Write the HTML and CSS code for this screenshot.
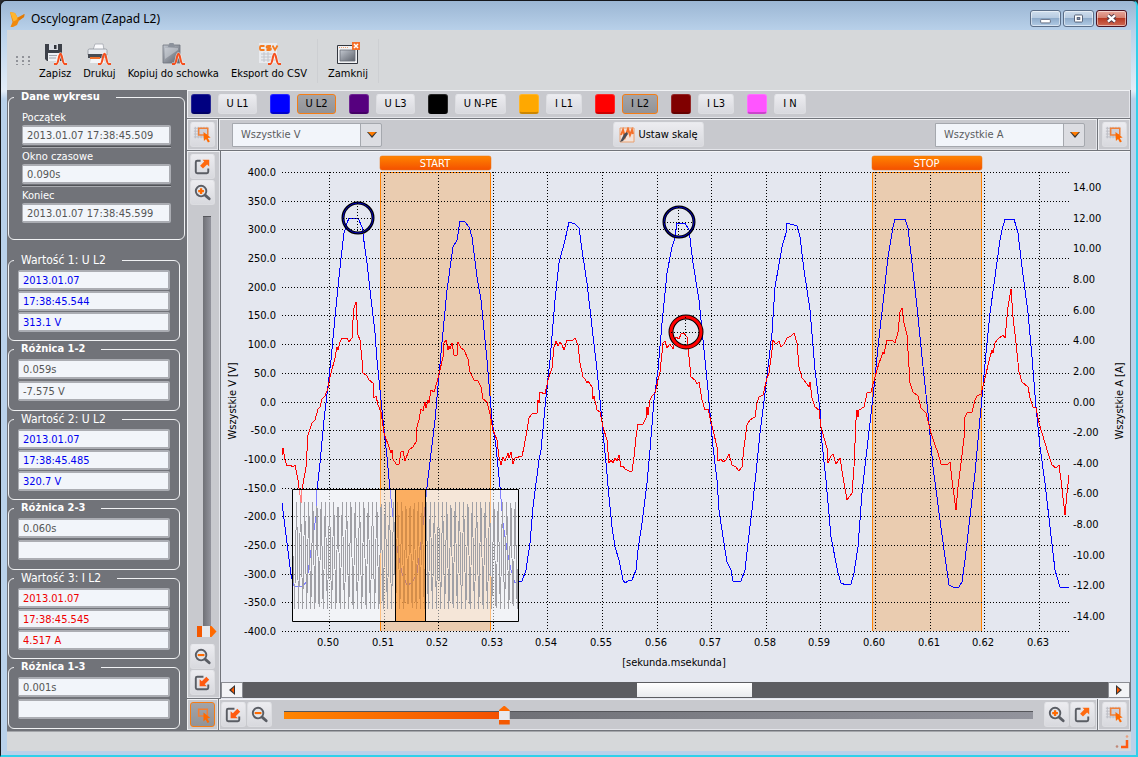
FILE: index.html
```html
<!DOCTYPE html>
<html lang="pl">
<head>
<meta charset="utf-8">
<title>Oscylogram (Zapad L2)</title>
<link rel="stylesheet" href="styles.css">
</head>
<body>
<svg class="defs" aria-hidden="true">
  <defs>
    <linearGradient id="g-orange" x1="0" y1="0" x2="0" y2="1"><stop offset="0" stop-color="#ff8400"/><stop offset="1" stop-color="#f45000"/></linearGradient>
    <linearGradient id="g-steel" x1="0" y1="0" x2="1" y2="1"><stop offset="0" stop-color="#c3c8d0"/><stop offset="1" stop-color="#5d626c"/></linearGradient>
    <symbol id="i-pick" viewBox="0 0 24 24">
      <path d="M4.500 4v12M7.500 4v12M10.500 4v12M13.500 4v12M16.500 4v12M3 5.500h15M3 8.500h15M3 11.500h15M3 14.500h15" stroke="#bcbdc4" fill="none"/>
      <path d="M8 5.500h9.500v7h-9.500z" fill="#cfd0d8" stroke="#f08038" stroke-width="1.600"/>
      <path d="M13 9.500l7.500 5.500-3 .6 2.200 3.600-2 1.200-2-3.700-2.200 2z" fill="#ff6a00"/>
    </symbol>
    <symbol id="i-pick-on" viewBox="0 0 24 24">
      <path d="M8 6.500h9v7h-9z" fill="none" stroke="#f08038" stroke-width="1.600"/>
      <path d="M13 10l7 5.500-3 .6 2.200 3.600-2 1.200-2-3.700-2.200 2z" fill="#ff6a00"/>
    </symbol>
    <symbol id="i-out" viewBox="0 0 24 24">
      <path d="M10 6H6.500Q5 6 5 7.500v10Q5 19 6.500 19h10q1.500 0 1.500-1.500V14" fill="none" stroke="#5a5d64" stroke-width="2"/>
      <path d="M12 5h7v7l-2.200-2.200-4.300 4.300-3-3L13.800 6.800z" fill="#ff6a10"/>
    </symbol>
    <symbol id="i-in" viewBox="0 0 24 24">
      <path d="M13 6H6.500Q5 6 5 7.500v10Q5 19 6.500 19h10q1.500 0 1.500-1.500V14" fill="none" stroke="#5a5d64" stroke-width="2"/>
      <path d="M9 16V8.500l2.300 2.300L16 6l3 3-4.700 4.700L16.600 16z" fill="#ff5a10"/>
    </symbol>
    <symbol id="i-plus" viewBox="0 0 24 24">
      <circle cx="10.500" cy="10.500" r="5.500" fill="#e2e4e9" stroke="#5a5d64" stroke-width="2"/>
      <path d="M15 15l4 3.500" stroke="#5a5d64" stroke-width="3" stroke-linecap="round"/>
      <path d="M10.500 7.500v6M7.500 10.500h6" stroke="#ff6a00" stroke-width="2.400"/>
    </symbol>
    <symbol id="i-minus" viewBox="0 0 24 24">
      <circle cx="10.500" cy="10.500" r="5.500" fill="#e2e4e9" stroke="#5a5d64" stroke-width="2"/>
      <path d="M15 15l4 3.500" stroke="#5a5d64" stroke-width="3" stroke-linecap="round"/>
      <path d="M7 10.500h7" stroke="#ff6a00" stroke-width="2.200"/>
    </symbol>
    <symbol id="i-wave" viewBox="0 0 14 14">
      <path d="M0 13h2.500C5 13 5 2 7 2s2 11 4.500 11H14" fill="none" stroke="#fff" stroke-opacity=".7" stroke-width="3.500"/>
      <path d="M0 13h2.500C5 13 5 2 7 2s2 11 4.500 11H14" fill="none" stroke="#f4501f" stroke-width="2.200"/>
    </symbol>
  </defs>
</svg>

<div class="window">
  <header class="titlebar">
    <svg class="logo" viewBox="0 0 18 18"><path d="M2 2l5 1 2.500 4.500L16.500 4 16 7l-5 3.500-2 4.500-4 2H2.500l2-5z" fill="#f08a10"/><path d="M2 2l5 1 2.500 4.500-1 2.500-3 1.500z" fill="#ffb52e"/><path d="M10 8l6.500-4L16 7l-5 3.500z" fill="#e07a08"/></svg>
    <h1 class="title">Oscylogram (Zapad L2)</h1>
    <button class="winbtn" aria-label="Minimalizuj"><svg viewBox="0 0 30 17"><rect x="9.500" y="9.500" width="11" height="4" rx="1" fill="#fff" stroke="#556075"/></svg></button>
    <button class="winbtn" aria-label="Maksymalizuj"><svg viewBox="0 0 30 17"><rect x="10.500" y="4.500" width="9" height="8" rx="1" fill="#fff" stroke="#46526a"/><rect x="13.500" y="7.500" width="3" height="2" fill="#8aa0bd" stroke="#46526a"/></svg></button>
    <button class="winbtn winbtn-close" aria-label="Zamknij okno"><svg viewBox="0 0 30 17"><path d="M11 5l8 7M19 5l-8 7" stroke="#4e3a48" stroke-width="4.800"/><path d="M11 5l8 7M19 5l-8 7" stroke="#fff" stroke-width="2.800"/></svg></button>
  </header>

  <div class="client">
    <div class="toolbar">
      <span class="grip"></span>
      <button class="tool"><svg viewBox="0 0 24 24"><path d="M2 2h17v17H4l-2-2z" fill="#3c4048"/><path d="M6 2h9v6H6z" fill="#d9dce2"/><path d="M11 3h2.500v4H11z" fill="#30333a"/><path d="M5 11h12v8H5z" fill="#eef0f3"/><path d="M6 13.500h8M6 16h7" stroke="#a2a6ae"/><use href="#i-wave" x="11" y="10" width="13" height="13"/></svg>Zapisz</button>
      <button class="tool"><svg viewBox="0 0 24 24"><path d="M6 8l2-6h8l1 6z" fill="#fbfbfd" stroke="#a4a8b0" stroke-width=".8"/><path d="M1 8.500q0-1.500 1.500-1.500h16q1.500 0 1.500 1.500V13H1z" fill="#e7e9ee" stroke="#8f949d" stroke-width=".8"/><path d="M1 12h19v4H1z" fill="#474b53"/><path d="M3 15h10v2H3z" fill="#f0702a"/><path d="M4 17h12l2 4H3z" fill="#f4f5f8"/><use href="#i-wave" x="11" y="10" width="13" height="13"/></svg>Drukuj</button>
      <button class="tool"><svg viewBox="0 0 24 24"><path d="M2 3h17v18H2z" fill="url(#g-steel)" stroke="#70757f" stroke-width=".8"/><path d="M7 5l1.500-4h4L14 5z" fill="#8c929c"/><path d="M4 6h13v2L4 17z" fill="#d3d7dd" opacity=".5"/><use href="#i-wave" x="11" y="10" width="13" height="13"/></svg>Kopiuj do schowka</button>
      <button class="tool"><svg viewBox="0 0 24 24"><path d="M2 1h18v20H2z" fill="#e9ebef"/><path d="M4 12h14M4 15h14M4 18h14M7 10v10M11 10v10" stroke="#c2c5cc"/><g fill="none" stroke="#f47b20" stroke-width="1.800"><path d="M7.500 4H4Q3 4 3 5v2q0 1 1 1h3.500"/><path d="M14 4h-3q-1.500 0-1.500 1t1.500 1h1.500q1.500 0 1.500 1t-1.500 1h-3"/><path d="M15.500 3.500L18 8l2.500-4.500"/></g><use href="#i-wave" x="11" y="10" width="13" height="13"/></svg>Eksport do CSV</button>
      <span class="sep"></span>
      <button class="tool"><svg viewBox="0 0 24 24"><path d="M1.500 3.500h20v18h-20z" fill="#f1f2f4" stroke="#33373f"/><path d="M4 8h15v11H4z" fill="url(#g-steel)" stroke="#6b707a" stroke-width=".8"/><path d="M3 5.500h9" stroke="#f0a070" stroke-dasharray="1 1"/><path d="M16 0h8v8h-8z" fill="#f4702a"/><path d="M18 2l4 4M22 2l-4 4" stroke="#fff" stroke-width="1.500"/></svg>Zamknij</button>
      <span class="sep"></span>
    </div>

    <div class="body">
      <aside class="sidebar">
        <fieldset class="group group-wide">
          <legend>Dane wykresu</legend>
          <div class="field"><label for="f1">Początek</label><input id="f1" readonly value="2013.01.07 17:38:45.509"></div>
          <div class="field"><label for="f2">Okno czasowe</label><input id="f2" readonly value="0.090s"></div>
          <div class="field"><label for="f3">Koniec</label><input id="f3" readonly value="2013.01.07 17:38:45.599"></div>
        </fieldset>
        <fieldset class="group value blue">
          <legend>Wartość 1: U L2</legend>
          <input aria-label="Data 1" readonly value="2013.01.07">
          <input aria-label="Czas 1" readonly value="17:38:45.544">
          <input aria-label="Pomiar 1" readonly value="313.1 V">
        </fieldset>
        <fieldset class="group diff">
          <legend>Różnica 1-2</legend>
          <input aria-label="Różnica czasu 1-2" readonly value="0.059s">
          <input aria-label="Różnica wartości 1-2" readonly value="-7.575 V">
        </fieldset>
        <fieldset class="group value blue">
          <legend>Wartość 2: U L2</legend>
          <input aria-label="Data 2" readonly value="2013.01.07">
          <input aria-label="Czas 2" readonly value="17:38:45.485">
          <input aria-label="Pomiar 2" readonly value="320.7 V">
        </fieldset>
        <fieldset class="group diff">
          <legend>Różnica 2-3</legend>
          <input aria-label="Różnica czasu 2-3" readonly value="0.060s">
          <input aria-label="Różnica wartości 2-3" readonly value="">
        </fieldset>
        <fieldset class="group value red">
          <legend>Wartość 3: I L2</legend>
          <input aria-label="Data 3" readonly value="2013.01.07">
          <input aria-label="Czas 3" readonly value="17:38:45.545">
          <input aria-label="Pomiar 3" readonly value="4.517 A">
        </fieldset>
        <fieldset class="group diff">
          <legend>Różnica 1-3</legend>
          <input aria-label="Różnica czasu 1-3" readonly value="0.001s">
          <input aria-label="Różnica wartości 1-3" readonly value="">
        </fieldset>
      </aside>

      <main class="main">
        <div class="cell channels">
          <div class="channel"><i class="swatch navy"></i><button class="btn ch-u">U L1</button></div>
          <div class="channel"><i class="swatch bright"></i><button class="btn ch-u on">U L2</button></div>
          <div class="channel"><i class="swatch purple"></i><button class="btn ch-u">U L3</button></div>
          <div class="channel"><i class="swatch black"></i><button class="btn ch-n">U N-PE</button></div>
          <div class="channel"><i class="swatch amber"></i><button class="btn ch-i">I L1</button></div>
          <div class="channel"><i class="swatch scarlet"></i><button class="btn ch-i on">I L2</button></div>
          <div class="channel"><i class="swatch maroon"></i><button class="btn ch-i">I L3</button></div>
          <div class="channel"><i class="swatch pink"></i><button class="btn ch-g">I N</button></div>
        </div>

        <div class="row">
          <div class="cell corner"><button class="btn icon" aria-label="Zaznacz"><svg><use href="#i-pick"/></svg></button></div>
          <div class="cell scalebar">
            <div class="combo"><select aria-label="Oś lewa"><option>Wszystkie V</option></select><svg viewBox="0 0 10 6"><path d="M0 0h10L5 6z" fill="#333"/><path d="M1 0h8L5 4z" fill="#ff7a00"/></svg></div>
            <button class="btn scale"><svg viewBox="0 0 16 16"><path d="M1 1h14v14H1z" fill="#f3e3da" stroke="#e8a070"/><path d="M2 8l2-5 2 7 3-8 2 6 2-5 1 4" stroke="#f4702a" stroke-width="2" fill="none"/><path d="M1 15l3-1 5-7-1-2-3 2-3 6z" fill="#4a4d55"/></svg>Ustaw skalę</button>
            <div class="combo"><select aria-label="Oś prawa"><option>Wszystkie A</option></select><svg viewBox="0 0 10 6"><path d="M0 0h10L5 6z" fill="#333"/><path d="M1 0h8L5 4z" fill="#ff7a00"/></svg></div>
          </div>
          <div class="cell corner"><button class="btn icon" aria-label="Zaznacz prawą oś"><svg><use href="#i-pick"/></svg></button></div>
        </div>

        <div class="row grow">
          <div class="cell vzoom">
            <button class="btn icon" aria-label="Powiększ maksymalnie w pionie"><svg><use href="#i-out"/></svg></button>
            <button class="btn icon" aria-label="Powiększ w pionie"><svg><use href="#i-plus"/></svg></button>
            <input class="vslider" type="range" min="0" max="1000" value="0" aria-label="Skala pionowa">
            <button class="btn icon" aria-label="Pomniejsz w pionie"><svg><use href="#i-minus"/></svg></button>
            <button class="btn icon" aria-label="Dopasuj w pionie"><svg><use href="#i-in"/></svg></button>
          </div>
          <div class="plot">
            <svg id="chart" class="chart" viewBox="221 152 909 528" role="img" aria-label="Przebieg napięcia i prądu"></svg>
            <div class="scroll">
              <button class="scrollbtn" aria-label="W lewo"><svg viewBox="0 0 6 10"><path d="M6 0v10L0 5z" fill="#333"/><path d="M5 2v6L2 5z" fill="#ff5a00"/></svg></button>
              <div class="scrolltrack"><div class="scrollthumb"></div></div>
              <button class="scrollbtn" aria-label="W prawo"><svg viewBox="0 0 6 10"><path d="M0 0v10L6 5z" fill="#333"/><path d="M1 2v6L4 5z" fill="#ff5a00"/></svg></button>
            </div>
          </div>
        </div>

        <div class="row">
          <div class="cell corner"><button class="btn icon on" aria-label="Zaznacz obszar"><svg><use href="#i-pick-on"/></svg></button></div>
          <div class="cell hzoom">
            <button class="btn icon" aria-label="Dopasuj w poziomie"><svg><use href="#i-in"/></svg></button>
            <button class="btn icon" aria-label="Pomniejsz w poziomie"><svg><use href="#i-minus"/></svg></button>
            <input class="hslider" type="range" min="0" max="1000" value="291" aria-label="Skala pozioma">
            <button class="btn icon" aria-label="Powiększ w poziomie"><svg><use href="#i-plus"/></svg></button>
            <button class="btn icon" aria-label="Powiększ maksymalnie w poziomie"><svg><use href="#i-out"/></svg></button>
          </div>
          <div class="cell corner"><button class="btn icon" aria-label="Zaznacz oś czasu"><svg><use href="#i-pick"/></svg></button></div>
        </div>
      </main>
    </div>

    <footer class="status"><svg viewBox="0 0 14 14"><path d="M12 5v7H6" fill="none" stroke="#ff5a10" stroke-width="2.500"/><circle cx="12" cy="1.500" r="1.300" fill="#e8a080"/><circle cx="2" cy="11.500" r="1.300" fill="#c08878"/></svg></footer>
  </div>
</div>
<script src="chart.js"></script>
</body>
</html>
```
FILE: styles.css
```css
* { box-sizing: border-box; }

body {
  margin: 0;
  font-family: "DejaVu Sans Condensed", "Noto Sans", sans-serif;
  font-size: 11px;
  line-height: 14px;
  color: #000;
  background: #2a2c30;
}

button, input, select { font: inherit; color: inherit; margin: 0; }
button { border: 0; padding: 0; background: none; }
.defs { position: absolute; width: 0; height: 0; }

/* window frame */
.window {
  display: flex;
  flex-direction: column;
  min-height: 100vh;
  padding: 1px 5px 4px;
  border: 1px solid #14161a;
  border-bottom: 2px solid #2fd0ea;
  border-right: 2px solid #2fd0ea;
  border-radius: 6px 6px 0 0;
  background: linear-gradient(#9bb6d3 0, #b9d1ea 30px, #e3edf8 90px, #b9d1ea 98px);
}
.titlebar { display: flex; align-items: center; height: 28px; padding: 5px 4px 0 2px; }
.logo { width: 18px; height: 18px; margin-right: 5px; }
.title { flex: 1; margin: 0; font-family: "Noto Sans", sans-serif; font-size: 12px; line-height: 16px; font-weight: 400; }
.winbtn {
  width: 31px; height: 17px; margin-left: 2px; border: 1px solid #5b6e88; border-radius: 3px;
  background: linear-gradient(#cfdeed 0, #b7cbe1 45%, #8faccb 50%, #b2cbe5 100%);
  box-shadow: inset 0 0 0 1px rgba(255,255,255,.5);
}
.winbtn svg { display: block; width: 29px; height: 15px; }
.winbtn-close { border-color: #4d1220; background: linear-gradient(#e8a89c 0, #d4806f 45%, #b83a23 50%, #cf6a55 100%); }

.client { flex: 1; display: flex; flex-direction: column; background: #d6d8da; margin-left: 1px; }

/* toolbar */
.toolbar { display: flex; align-items: flex-start; height: 60px; padding: 12px 0 0 9px; }
.grip {
  width: 15px; height: 9px; margin: 14px 8px 0 0;
  background-image: radial-gradient(circle at 1px 1px, #909298 1px, transparent 1px);
  background-size: 6px 4px;
}
.tool { display: flex; flex-direction: column; align-items: center; margin-right: 12px; line-height: 14px; white-space: nowrap; }
.tool svg { width: 24px; height: 24px; margin-bottom: 1px; }
.sep { width: 1px; height: 44px; margin: -3px 10px 0 -2px; background: #cdcfd2; }

.body { flex: 1; display: flex; }

/* sidebar */
.sidebar {
  width: 180px; padding: 0 2px 0 1px; background: #717379; color: #fff;
}
.group {
  margin: 0 5px 1px 0; padding: 3px 9px 7px; border: 1px solid #f0f1f3; border-radius: 6px; min-width: 0;
}
.group legend { margin-left: -4px; padding: 0 16px 0 7px; line-height: 14px; font-weight: 700; }
.group.value legend { font-weight: 400; font-size: 12px; }
.group input {
  display: block; width: 100%; height: 20px; margin-bottom: 1px; padding: 1px 4px;
  border: 2px solid #abadb3; border-left-width: 1px; border-radius: 2px; background: #f2f5fa; color: #555;
}
.group.diff input { margin-bottom: 2px; }
.group.blue input { color: #0000f0; }
.group.red input { color: #f00000; }
.group-wide { margin: 0 0 13px; padding: 7px 13px 14px; }
.group-wide legend { margin-left: -8px; }
.field { padding-bottom: 1px; margin-bottom: 2px; border-bottom: 1px solid #a9abb0; box-shadow: 0 -1px 0 #505257 inset; }
.field:last-child { border: 0; box-shadow: none; margin: 0; }
.field label { display: block; }

/* panels */
.main { flex: 1; display: flex; flex-direction: column; min-width: 0; background: #c8c9ce; border-right: 1px solid #71747a; }
.row { display: flex; }
.grow { flex: 1; }
.cell {
  border-right: 1px solid #71747a; border-bottom: 1px solid #71747a;
  box-shadow: inset 1px 1px 0 #f0f1f4, inset -1px -1px 0 #e4e5ea;
  background: #c8c9ce;
}
.row > .cell:last-child, .channels { border-right: 0; }
.btn { border-radius: 3px; background: linear-gradient(#ececf0, #d8d9de); border: 1px solid #dcdde1; border-top-color: #e8e9ed; }
.btn.on { background: linear-gradient(#a3a4a8, #929397); border: 1px solid #f57c14; border-radius: 3px; }
.icon { width: 25px; height: 25px; }
.icon svg { display: block; width: 23px; height: 23px; }

.channels { display: flex; align-items: center; gap: 13px; height: 29px; padding-left: 4px; }
.channel { display: flex; gap: 7px; }
.channel .btn { height: 20px; }
.ch-u { width: 39px; }
.ch-n { width: 51px; }
.ch-i { width: 36px; }
.ch-g { width: 32px; }
.swatch { width: 20px; height: 20px; border-radius: 3px; border: 1px solid rgba(255,255,255,.15); border-bottom: 2px solid rgba(0,0,0,.2); }
.navy { background-color: #000080; }
.bright { background-color: #0000ff; }
.purple { background-color: #56007f; }
.black { background-color: #000; }
.amber { background-color: #ffa800; }
.scarlet { background-color: #ff0000; }
.maroon { background-color: #800000; }
.pink { background-color: #ff55ff; }

.corner { display: flex; align-items: center; justify-content: center; width: 32px; height: 32px; }
.scalebar { flex: 1; display: flex; align-items: center; justify-content: space-between; padding: 0 12px 0 13px; }
.combo { position: relative; width: 150px; }
.combo select {
  display: block; width: 100%; height: 24px; padding: 0 8px; appearance: none; color: #5a5c60;
  border: 1px solid #a5a8ae; border-radius: 0 2px 2px 0;
  background: linear-gradient(90deg, #f2f5fa 127px, #a5a8ae 127px, #a5a8ae 128px, #dcdde2 128px);
}
.combo svg { position: absolute; right: 5px; top: 9px; width: 10px; height: 6px; pointer-events: none; }
.scale { display: flex; align-items: center; gap: 3px; height: 25px; padding: 0 5px; }
.scale svg { width: 16px; height: 16px; }

.vzoom { width: 34px; display: flex; flex-direction: column; align-items: center; gap: 1px; padding: 3px 2px 3px 0; }
.plot { flex: 1; display: flex; flex-direction: column; background: #e4e7ef; min-width: 0; border-top: 1px solid #f4f5f8; }
.chart { display: block; width: 100%; height: auto; aspect-ratio: 909 / 528; }
.chart text { font-size: 11px; fill: #000; }
.chart .end { text-anchor: end; }
.chart .mid { text-anchor: middle; }
.chart .flag { fill: #fff; text-anchor: middle; }

.scroll { display: flex; height: 16px; margin-top: auto; margin-bottom: 1px; background: #5c5d61; }
.scrollbtn { display: flex; align-items: center; justify-content: center; width: 22px; background: #f3f4f6; border: 1px solid #8b8d93; }
.scrollbtn svg { width: 6px; height: 10px; }
.scrolltrack { flex: 1; padding: 1px 0; }
.scrollthumb { width: 13.2%; height: 14px; margin-left: 45.6%; background: linear-gradient(#fff, #e9ebee); }

/* sliders */
.vslider, .hslider { appearance: none; background: none; }
.vslider { flex: 1; width: 20px; margin: 10px 0 6px 8px; writing-mode: vertical-lr; direction: rtl; }
.vslider::-webkit-slider-runnable-track { width: 8px; height: 100%; background: linear-gradient(90deg, #6f7076, #93949d); border-top: 1px solid #55565b; }
.vslider::-webkit-slider-thumb {
  appearance: none; width: 20px; height: 11px; margin-left: -6px;
  background: linear-gradient(90deg, #f45800 0 5px, #e8e9ec 5px 13px, #ff6a00 13px);
  clip-path: polygon(0 0, 75% 0, 100% 50%, 75% 100%, 0 100%);
}
.hzoom { flex: 1; display: flex; align-items: center; gap: 1px; padding: 0 2px; }
.hslider { flex: 1; height: 20px; margin: 0 10px 0 11px; }
.hslider::-webkit-slider-runnable-track { height: 8px; border-top: 1px solid #55565b; background: linear-gradient(90deg, #ff8400 0, #f45000 29%, #6f7076 29%, #93949d 100%); }
.hslider::-webkit-slider-thumb {
  appearance: none; width: 11px; height: 19px; margin-top: -6px;
  background: linear-gradient(#ff6a00 0 5px, #e8e9ec 5px 14px, #f45800 14px);
  clip-path: polygon(0 25%, 50% 0, 100% 25%, 100% 100%, 0 100%);
}

.status { display: flex; justify-content: flex-end; align-items: flex-end; height: 20px; padding: 0 2px 2px; border-top: 1px solid #a4a6aa; }
.status svg { width: 14px; height: 14px; }
```
FILE: chart.js
```js
const NS = "http://www.w3.org/2000/svg";
const chart = document.getElementById("chart");

function add(name, attrs, text) {
  const node = document.createElementNS(NS, name);
  for (const key in attrs) node.setAttribute(key, attrs[key]);
  if (text !== undefined) node.textContent = text;
  chart.appendChild(node);
  return node;
}

const LEFT = 282, RIGHT = 1069, TOP = 172, BOTTOM = 631, MID = 401.5;

// time windows
function band(x1, x2, label) {
  add("rect", { x: x1, y: TOP, width: x2 - x1, height: BOTTOM - TOP, fill: "#eaccb0" });
  add("path", { d: `M${x1 + 0.5} ${BOTTOM}V${TOP + 0.5}H${x2 + 0.5}V${BOTTOM}`, fill: "none", stroke: "#ff8000" });
  add("rect", { x: x1, y: 156, width: x2 - x1 + 1, height: 14, rx: 2, fill: "url(#g-orange)", stroke: "#e87010", "stroke-width": 0.5 });
  add("text", { x: (x1 + x2) / 2, y: 167, class: "flag" }, label);
}
band(380, 490, "START");
band(872, 981, "STOP");

// grid and axis labels
const dots = { stroke: "#000", "stroke-dasharray": "1 2", "shape-rendering": "crispEdges" };
for (let v = 400; v >= -400; v -= 50) {
  const y = Math.round(MID - v * 0.574);
  add("path", { d: `M${LEFT} ${y + 0.5}H${RIGHT}`, ...dots });
  add("text", { x: 276, y: y + 4, class: "end" }, v.toFixed(1));
}
for (let i = 0; i < 14; i++) {
  const x = Math.round(329 + i * 54.6);
  add("path", { d: `M${x + 0.5} ${TOP}V${BOTTOM}`, ...dots });
  add("text", { x: x - 1, y: 646, class: "mid" }, (0.5 + i / 100).toFixed(2));
}
for (let a = 14; a >= -14; a -= 2) {
  add("text", { x: 1073, y: Math.round(MID - a * 15.33) + 4 }, a.toFixed(2));
}
add("text", { x: 674, y: 666, class: "mid" }, "[sekunda.msekunda]");
add("text", { transform: "translate(236 401) rotate(-90)", class: "mid" }, "Wszystkie V [V]");
add("text", { transform: "translate(1123 401) rotate(-90)", class: "mid" }, "Wszystkie A [A]");

// measured waveforms
const voltage = "282,503 291,575 294,586 303,587 307,580 312,543 316,517 317,490 320,463 324,420 331,360 335,317 338,287 341,258 344,233 347,223 349,218 358,218 362,227 367,263 370,290 375,333 377,360 383,420 387,457 390,490 393,517 398,553 402,573 407,585 412,583 417,573 420,550 424,517 427,487 435,420 441,353 447,290 453,247 457,240 460,221 465,222 469,227 472,237 477,277 481,300 485,340 487,360 492,420 496,447 500,487 503,523 507,550 511,570 515,583 522,581 526,570 530,543 533,507 539,460 541,450 546,397 550,360 555,300 559,263 565,240 569,222 575,224 579,228 582,250 587,283 592,327 597,370 600,400 603,433 606,463 609,497 612,527 615,547 619,560 623,580 625,583 628,581 632,580 636,570 638,550 642,523 647,483 650,450 654,400 658,370 662,323 667,273 672,247 675,238 677,223 685,223 689,230 693,263 699,300 703,340 708,390 713,447 717,480 719,510 723,537 727,562 731,570 733,581 741,581 745,570 748,543 752,510 756,473 760,433 765,393 772,333 775,287 782,247 786,233 787,223 797,226 800,237 804,270 810,310 815,370 820,410 822,443 826,480 831,537 838,573 841,583 846,585 851,584 854,573 858,547 862,493 868,440 873,397 878,347 883,303 888,257 893,227 895,219 905,219 908,228 912,263 917,307 922,357 928,413 933,467 940,520 945,557 949,585 953,587 959,587 962,582 965,560 970,517 975,473 978,440 982,397 986,353 990,313 995,277 1000,240 1002,230 1005,219 1014,219 1018,233 1022,267 1028,313 1032,357 1036,407 1040,447 1045,483 1050,527 1055,570 1060,587 1069,587";
const current = "282,455 283,448 285,460 287,466 290,465 293,467 295,465 298,480 301,503 302,490 306,467 308,435 312,423 315,420 318,409 320,407 322,399 325,396 328,388 330,377 335,358 337,347 338,350 340,342 342,338 347,338 349,342 352,338 353,320 354,308 356,302 357,320 358,335 360,340 362,360 363,373 367,376 369,380 373,383 374,398 376,396 378,405 381,412 384,433 389,447 391,453 392,450 393,459 396,464 399,464 401,452 403,451 405,461 409,450 413,447 416,442 417,427 419,420 421,409 423,411 425,402 426,408 428,400 429,403 431,390 434,392 437,382 440,370 443,357 444,343 446,340 448,350 449,346 450,349 452,343 454,355 457,355 458,342 461,348 464,350 468,359 470,372 474,380 478,381 481,387 483,399 487,402 490,414 493,430 497,440 499,457 501,465 503,457 505,461 508,453 509,458 511,452 513,464 515,458 522,456 524,447 527,430 529,418 532,414 537,413 538,400 539,403 540,392 545,394 548,380 552,368 554,347 556,341 558,346 560,342 562,345 564,350 567,340 572,341 575,338 578,345 580,363 583,377 585,379 587,383 588,381 592,387 593,399 594,396 597,410 600,412 603,427 607,440 609,463 611,460 613,463 615,458 617,461 619,455 621,467 623,466 625,469 629,471 632,471 634,457 636,437 638,424 643,424 646,418 647,407 648,415 650,400 652,396 655,393 660,372 663,343 665,341 667,348 670,344 673,349 676,337 679,339 681,334 684,333 687,337 689,357 691,377 695,380 697,384 699,382 702,400 705,410 708,409 713,430 717,447 718,461 721,459 723,462 726,460 729,454 732,465 736,467 739,471 742,467 744,447 747,425 750,420 755,417 757,403 759,397 763,395 767,378 769,373 772,350 773,340 776,344 779,341 781,347 784,344 787,338 791,336 794,333 797,343 799,367 802,378 804,380 809,387 810,382 812,398 815,407 819,410 821,427 827,448 828,463 831,456 833,454 836,464 838,461 840,458 843,477 847,500 850,496 852,493 854,467 856,420 857,410 858,417 859,410 864,407 867,393 871,392 875,377 879,363 881,358 883,352 884,354 887,340 892,340 895,343 898,332 900,312 902,308 904,323 907,335 909,367 910,383 913,392 918,396 921,408 926,413 931,433 935,445 938,453 941,464 948,464 950,462 952,480 956,510 958,487 961,463 964,438 965,417 967,413 972,412 975,400 977,396 981,394 985,378 990,357 992,350 993,353 995,343 998,339 1003,335 1005,338 1008,307 1011,289 1013,317 1016,343 1019,372 1022,382 1028,387 1030,398 1033,407 1036,408 1039,423 1045,443 1048,453 1052,465 1056,468 1059,465 1061,480 1065,515 1067,493 1069,475";
add("polyline", { points: voltage, fill: "none", stroke: "#0000ff", "shape-rendering": "crispEdges" });
add("polyline", { points: current, fill: "none", stroke: "#ff0000", "shape-rendering": "crispEdges" });

// cursors
function cursor(x, y, color, width) {
  add("circle", { cx: x, cy: y, r: 15, fill: "none", stroke: "#000", "stroke-width": width + 2 });
  add("circle", { cx: x, cy: y, r: 15, fill: "none", stroke: color, "stroke-width": width });
  add("path", { d: `M${x - 15} ${y + 0.5}H${x + 15}M${x - 0.5} ${y - 15}V${y + 15}`, ...dots });
}
cursor(358, 218, "#0000c0", 1);
cursor(679, 222, "#0000c0", 1);
cursor(686, 332, "#ff0000", 3);

// overview of the whole recording, with the visible part marked
add("rect", { x: 292.5, y: 489.5, width: 226, height: 132, fill: "#fff", "fill-opacity": 0.5 });
let d = "";
for (let i = 0; i <= 225; i++) {
  const x = 293.5 + i;
  const y = 556 + 66 * Math.sin(i * 1.5 + Math.sin(i / 20));
  d += (i ? "L" : "M") + x + " " + Math.max(502, Math.min(609, Math.round(y)));
}
add("path", { d, fill: "none", stroke: "#a0a0a6", "shape-rendering": "crispEdges" });
add("rect", { x: 395.5, y: 489.5, width: 30, height: 132, fill: "#ff8000", "fill-opacity": 0.55 });
add("path", { d: "M292.500 489.500H518.500V621.500H292.500ZM395.500 489.500V621.500M425.500 489.500V621.500", fill: "none", stroke: "#000" });
```
